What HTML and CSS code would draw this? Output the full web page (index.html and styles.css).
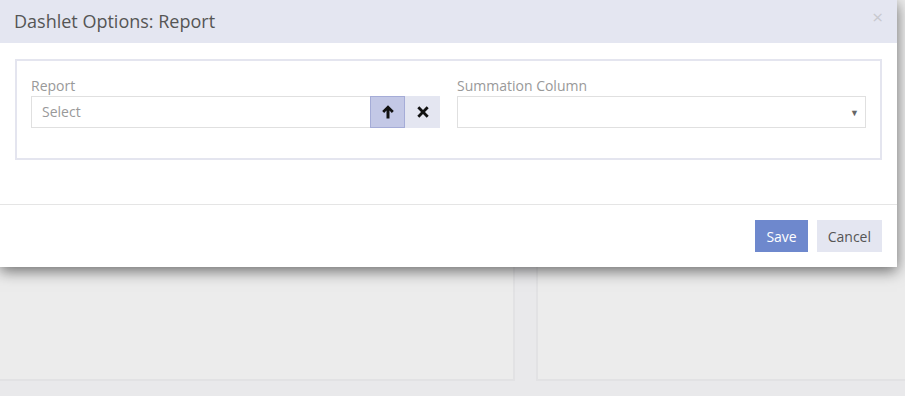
FILE: index.html
```html
<!DOCTYPE html>
<html>
<head>
  <meta charset="UTF-8">
  <title>Dashlet Options</title>
  <link rel="stylesheet" href="styles.css">
</head>
<body>
  <div class="dashboard">
    <div class="dashlet"></div>
    <div class="dashlet"></div>
  </div>

  <div class="modal">
    <div class="modal-header">
      <h4>Dashlet Options: Report</h4>
      <span class="close">&times;</span>
    </div>
    <div class="modal-body">
      <div class="fieldset">
        <div class="field">
          <label>Report</label>
          <div class="input-group">
            <div class="input">Select</div>
            <button class="btn-icon btn-pick" type="button">
              <svg width="12" height="14" viewBox="0 0 12 14"><path d="M6 0.3 L11.8 6.1 L9.8 8 L7.5 5.6 L7.5 13.6 L4.5 13.6 L4.5 5.6 L2.2 8 L0.2 6.1 Z" fill="#111"/></svg>
            </button>
            <button class="btn-icon btn-clear" type="button">
              <svg width="12" height="12" viewBox="0 0 12 12"><path d="M2.3 0.3 L6 4 L9.7 0.3 L11.7 2.3 L8 6 L11.7 9.7 L9.7 11.7 L6 8 L2.3 11.7 L0.3 9.7 L4 6 L0.3 2.3 Z" fill="#111"/></svg>
            </button>
          </div>
        </div>
        <div class="field">
          <label>Summation Column</label>
          <div class="select"><span class="caret">&#9660;</span></div>
        </div>
      </div>
    </div>
    <div class="modal-footer">
      <button class="btn btn-primary" type="button">Save</button>
      <button class="btn btn-default" type="button">Cancel</button>
    </div>
  </div>
</body>
</html>
```

FILE: styles.css
```css
body {
  margin: 0;
  background-color: #e9e9eb;
  font-family: "Open Sans", "Liberation Sans", sans-serif;
  font-size: 14px;
  color: #555;
  height: 396px;
  overflow: hidden;
}
.dashboard {
  display: grid;
  grid-template-columns: 515px 1fr;
  gap: 21px;
}
.dashlet {
  height: 381px;
  background-color: #ececec;
  border-right: 2px solid #e2e2e4;
  border-bottom: 2px solid #e2e2e4;
  box-sizing: border-box;
}
.dashboard .dashlet:last-child {
  border-left: 2px solid #e2e2e4;
  border-right: none;
  margin-right: -10px;
}
.modal {
  position: absolute;
  top: 0;
  left: 0;
  width: 897px;
  background-color: #fff;
  box-shadow: 0 4px 14px rgba(0, 0, 0, 0.55);
}
.modal-header {
  height: 43px;
  background-color: #e4e6f1;
  display: flex;
  align-items: center;
  justify-content: space-between;
  padding: 0 14px;
}
.modal-header h4 {
  margin: 0;
  font-size: 18px;
  font-weight: normal;
  color: #555;
  position: relative;
  top: -1px;
}
.close {
  color: #c8c9cf;
  font-size: 19px;
  position: relative;
  top: -5px;
}
.modal-body {
  padding: 16px 15px 44px 15px;
}
.fieldset {
  border: 2px solid #e4e5ef;
  padding: 15px 14px 30px 14px;
  display: grid;
  grid-template-columns: 1fr 1fr;
  gap: 17px;
}
.field label {
  display: block;
  color: #999;
  font-size: 14px;
  line-height: 20px;
}
.input-group {
  display: flex;
  height: 32px;
}
.input {
  flex: 1;
  border: 1px solid #e0e0e0;
  border-right: none;
  padding: 0 10px;
  line-height: 30px;
  color: #999;
}
.btn-icon {
  width: 35px;
  border: none;
  display: flex;
  align-items: center;
  justify-content: center;
  padding: 0;
}
.btn-pick {
  background-color: #c3c8e6;
  border: 1px solid #a5acd7;
}
.btn-clear {
  background-color: #e4e6f1;
}
.select {
  height: 32px;
  box-sizing: border-box;
  border: 1px solid #e0e0e0;
  display: flex;
  align-items: center;
  justify-content: flex-end;
  padding-right: 6px;
}
.caret {
  font-size: 9px;
  color: #666;
}
.modal-footer {
  border-top: 1px solid #e5e5e5;
  padding: 15px;
  display: flex;
  justify-content: flex-end;
  gap: 9px;
}
.btn {
  height: 32px;
  border: none;
  font-family: "Open Sans", "Liberation Sans", sans-serif;
  font-size: 14px;
  padding: 0 11px;
}
.btn-primary {
  background-color: #6e88cd;
  color: #fff;
}
.btn-default {
  background-color: #e4e6f1;
  color: #555;
}
```
